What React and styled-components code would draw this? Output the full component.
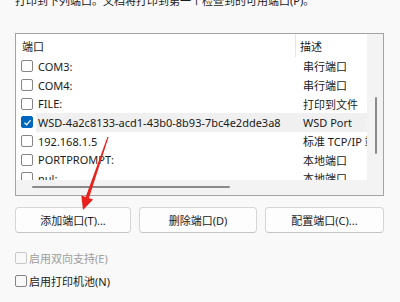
import React from 'react'
import styled, { createGlobalStyle } from 'styled-components'

const GlobalStyle = createGlobalStyle`
body{
    margin:0;
    background-color:#f9f9f9;
    font-family:"Noto Sans","Noto Sans CJK SC",sans-serif;
}
`

const Page = styled.div`
position:relative;
width:400px;
height:302px;
overflow:hidden;
box-sizing:border-box;
padding:0 16px 0 15px;
color:#1a1a1a;
font-size:11px;
`

const Intro = styled.div`
margin-top:-7px;
height:16px;
line-height:16px;
white-space:nowrap;
`

const ListBox = styled.div`
margin-top:24px;
height:163px;
box-sizing:border-box;
border:1px solid #a3a3a3;
background-color:white;
display:grid;
grid-template-columns:1fr 16px;
grid-template-rows:1fr 15px;
overflow:hidden;
`

const ListBody = styled.div`
overflow:hidden;
`

const HeaderRow = styled.div`
display:grid;
grid-template-columns:279px 1fr;
height:23px;
>div{
    display:flex;
    align-items:center;
    padding-left:6px;
}
>div + div{
    border-left:1px solid #e5e5e5;
    padding-left:4px;
}
`

const Row = styled.div`
display:flex;
align-items:center;
height:18.7px;
padding-left:5px;
white-space:nowrap;
`

const RowMain = styled.div`
display:flex;
align-items:center;
flex:1;
height:100%;
background-color:${p => p.selected ? '#f0f0f0' : 'transparent'};
>span:first-child{
    width:259px;
    padding-left:2px;
}
>span:last-child{
    padding-left:6px;
}
`

const Box = styled.span`
flex:none;
width:12px;
height:12px;
box-sizing:border-box;
border-radius:2px;
border:1px solid ${p => p.checked ? '#0067c0' : p.disabled ? '#c8c8c8' : '#858585'};
background-color:${p => p.checked ? '#0067c0' : 'transparent'};
display:flex;
align-items:center;
justify-content:center;
margin-right:${p => p.gap || 1}px;
`

const VScroll = styled.div`
grid-row:1;
grid-column:2;
background-color:#f3f3f3;
position:relative;
>i{
    position:absolute;
    left:8px;
    top:63px;
    width:2px;
    height:57px;
    border-radius:1px;
    background-color:#8a8a8a;
}
`

const HScroll = styled.div`
grid-row:2;
grid-column:1 / span 2;
background-color:#f3f3f3;
position:relative;
>i{
    position:absolute;
    left:16px;
    top:6px;
    width:198px;
    height:2px;
    border-radius:1px;
    background-color:#8a8a8a;
}
`

const Buttons = styled.div`
margin-top:11px;
display:grid;
grid-template-columns:116px 118px 1fr;
gap:8px;
`

const Button = styled.button`
height:26px;
box-sizing:border-box;
border:1px solid #d5d5d5;
border-bottom-color:#c4c4c4;
border-radius:4px;
background-color:#fdfdfd;
font:inherit;
color:#1a1a1a;
padding:0;
`

const Option = styled.label`
display:flex;
align-items:center;
height:16px;
margin-top:${p => p.top}px;
color:${p => p.disabled ? '#9d9d9d' : '#1a1a1a'};
`

const Arrow = styled.svg`
position:absolute;
left:0;
top:0;
pointer-events:none;
`

const Check = () => (
    <svg width="9" height="9" viewBox="0 0 9 9">
        <path d="M1.5 4.8 L3.6 6.8 L7.6 2.2" fill="none" stroke="white" strokeWidth="1.2"/>
    </svg>
)

const ports = [
    ['COM3:', '串行端口'],
    ['COM4:', '串行端口'],
    ['FILE:', '打印到文件'],
    ['WSD-4a2c8133-acd1-43b0-8b93-7bc4e2dde3a8', 'WSD Port', true],
    ['192.168.1.5', '标准 TCP/IP 端口'],
    ['PORTPROMPT:', '本地端口'],
    ['nul:', '本地端口'],
]

const App = () => {
    return(
        <>
        <GlobalStyle/>
        <Page>
            <Intro>打印到下列端口。文档将打印到第一个检查到的可用端口(P)。</Intro>
            <ListBox>
                <ListBody>
                    <HeaderRow>
                        <div>端口</div>
                        <div>描述</div>
                    </HeaderRow>
                    {ports.map(([name, desc, checked]) => (
                        <Row key={name}>
                            <Box checked={checked} gap={3}>{checked && <Check/>}</Box>
                            <RowMain selected={checked}>
                                <span>{name}</span>
                                <span>{desc}</span>
                            </RowMain>
                        </Row>
                    ))}
                </ListBody>
                <VScroll><i/></VScroll>
                <HScroll><i/></HScroll>
            </ListBox>
            <Buttons>
                <Button>添加端口(T)...</Button>
                <Button>删除端口(D)</Button>
                <Button>配置端口(C)...</Button>
            </Buttons>
            <Option disabled top={17}><Box disabled gap={2}/>启用双向支持(E)</Option>
            <Option top={7}><Box gap={2}/>启用打印机池(N)</Option>
            <Arrow width="400" height="302">
                <polygon points="107.4,137 108.6,137 88.8,198.4 85.6,197.2" fill="#e8201c"/>
                <polygon points="83,210 81.3,195.6 93.1,199.6" fill="#e8201c"/>
            </Arrow>
        </Page>
        </>
    )
}

export default App
